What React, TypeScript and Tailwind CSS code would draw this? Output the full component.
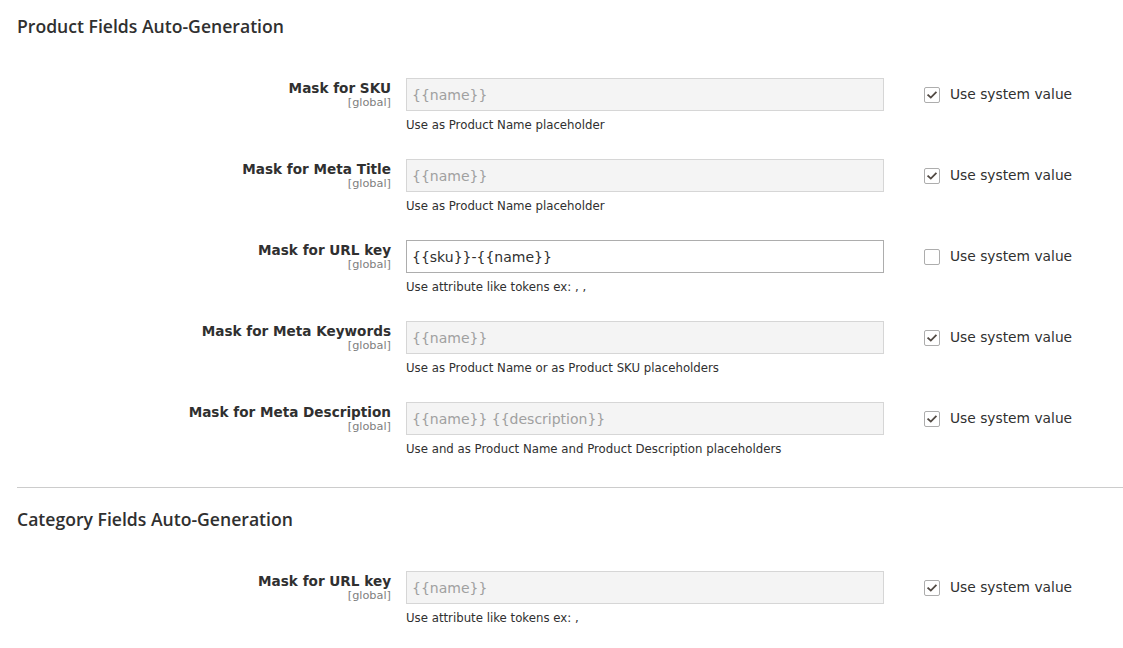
import type { ReactNode } from 'react';

interface Field {
  label: string;
  value: string;
  hint: string;
  useSystem: boolean;
}

const productFields: Field[] = [
  { label: 'Mask for SKU', value: '{{name}}', hint: 'Use as Product Name placeholder', useSystem: true },
  { label: 'Mask for Meta Title', value: '{{name}}', hint: 'Use as Product Name placeholder', useSystem: true },
  { label: 'Mask for URL key', value: '{{sku}}-{{name}}', hint: 'Use attribute like tokens ex: , ,', useSystem: false },
  {
    label: 'Mask for Meta Keywords',
    value: '{{name}}',
    hint: 'Use as Product Name or as Product SKU placeholders',
    useSystem: true,
  },
  {
    label: 'Mask for Meta Description',
    value: '{{name}} {{description}}',
    hint: 'Use and as Product Name and Product Description placeholders',
    useSystem: true,
  },
];

const categoryFields: Field[] = [
  { label: 'Mask for URL key', value: '{{name}}', hint: 'Use attribute like tokens ex: ,', useSystem: true },
];

const bodyFont = "font-['DejaVu_Sans',Verdana,sans-serif]";

function Checkbox({ checked }: { checked: boolean }) {
  return (
    <span className="flex h-4 w-4 items-center justify-center rounded-[2px] border border-[#adadad] bg-white">
      {checked && (
        <svg width="12" height="12" viewBox="0 0 12 12" fill="none">
          <path d="M2.2 6.2 L4.8 8.6 L9.8 3.4" stroke="#514943" strokeWidth="1.8" strokeLinecap="square" />
        </svg>
      )}
    </span>
  );
}

function Row({ field }: { field: Field }) {
  return (
    <div className="mb-[25px] flex items-start">
      <div className="w-[374px] pt-[1px] text-right">
        <div className={`${bodyFont} text-[13.6px] font-bold leading-[18px] text-[#303030]`}>{field.label}</div>
        <div className={`${bodyFont} text-[11.3px] leading-[12px] text-[#808080]`}>[global]</div>
      </div>
      <div className="ml-[15px] w-[478px]">
        <input
          readOnly
          disabled={field.useSystem}
          value={field.value}
          className={`${bodyFont} h-[33px] w-full border px-[5px] text-[14px] outline-none ${
            field.useSystem
              ? 'border-[#d6d6d6] bg-[#f4f4f4] text-[#a0a0a0]'
              : 'border-[#adadad] bg-white text-[#303030]'
          }`}
        />
        <div className={`${bodyFont} mt-[5px] text-[11.75px] leading-[18px] text-[#303030]`}>{field.hint}</div>
      </div>
      <label className="ml-[40px] flex h-[33px] items-center gap-[10px]">
        <Checkbox checked={field.useSystem} />
        <span className={`${bodyFont} text-[13.8px] text-[#303030]`}>Use system value</span>
      </label>
    </div>
  );
}

function Section({ title, children }: { title: string; children: ReactNode }) {
  return (
    <div>
      <h2 className="mb-[42px] font-['Open_Sans',sans-serif] text-[17.6px] font-semibold leading-[20px] text-[#303030]">
        {title}
      </h2>
      {children}
    </div>
  );
}

export default function App() {
  return (
    <div className="min-h-[648px] w-full bg-white pl-[17px] pt-[16px]">
      <Section title="Product Fields Auto-Generation">
        {productFields.map((f) => (
          <Row key={f.label} field={f} />
        ))}
      </Section>
      <div className="mb-[21px] mt-[29px] h-px bg-[#cccccc]" />
      <Section title="Category Fields Auto-Generation">
        {categoryFields.map((f) => (
          <Row key={f.label} field={f} />
        ))}
      </Section>
    </div>
  );
}
